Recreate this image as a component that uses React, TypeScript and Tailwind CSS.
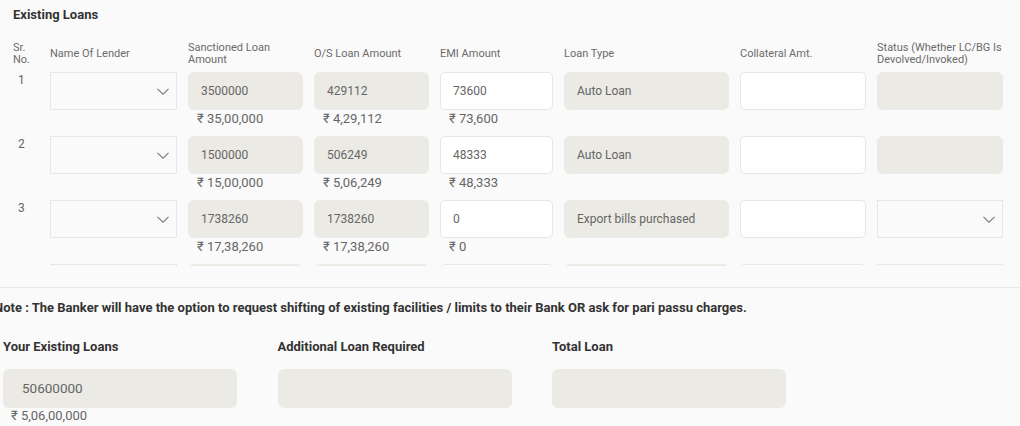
import type { ReactNode } from "react";

type Row = {
  no: number;
  sanctioned: string;
  sanctionedFmt: string;
  os: string;
  osFmt: string;
  emi: string;
  emiFmt: string;
  loanType: string;
  statusSelect?: boolean;
};

const rows: Row[] = [
  { no: 1, sanctioned: "3500000", sanctionedFmt: "₹ 35,00,000", os: "429112", osFmt: "₹ 4,29,112", emi: "73600", emiFmt: "₹ 73,600", loanType: "Auto Loan" },
  { no: 2, sanctioned: "1500000", sanctionedFmt: "₹ 15,00,000", os: "506249", osFmt: "₹ 5,06,249", emi: "48333", emiFmt: "₹ 48,333", loanType: "Auto Loan" },
  { no: 3, sanctioned: "1738260", sanctionedFmt: "₹ 17,38,260", os: "1738260", osFmt: "₹ 17,38,260", emi: "0", emiFmt: "₹ 0", loanType: "Export bills purchased", statusSelect: true },
  { no: 4, sanctioned: "", sanctionedFmt: "", os: "", osFmt: "", emi: "", emiFmt: "", loanType: "", statusSelect: true },
];

const cols = "grid grid-cols-[26px_127px_115px_115px_113px_165px_126px_126px] gap-x-[11px]";

function Chevron() {
  return (
    <svg width="12" height="7" viewBox="0 0 12 7" fill="none" className="shrink-0">
      <path d="M0.5 0.8L6 6.2L11.5 0.8" stroke="#7a7a7a" strokeWidth="1.1" />
    </svg>
  );
}

function SelectBox() {
  return (
    <div className="flex h-[38px] items-center justify-end border border-[#e6e6e6] bg-[#fafafa] pr-[7px]">
      <Chevron />
    </div>
  );
}

function GrayField({ children }: { children?: ReactNode }) {
  return (
    <div className="flex h-[38px] items-center rounded-[6px] bg-[#ebeae4] px-[13px] text-[12px] text-[#666]">
      {children}
    </div>
  );
}

function WhiteField({ children }: { children?: ReactNode }) {
  return (
    <div className="flex h-[38px] items-center rounded-[5px] border border-[#e6e6e6] bg-white px-[12px] text-[12px] text-[#666]">
      {children}
    </div>
  );
}

function Helper({ children }: { children?: ReactNode }) {
  return <div className="h-[18px] pl-[9px] text-[13px] leading-[18px] text-[#666]">{children}</div>;
}

export default function App() {
  return (
    <div className="h-[426px] w-[1020px] overflow-hidden bg-[#fafafa] font-['Roboto','Liberation_Sans',sans-serif]">
      <div className="px-[13px] pt-[7px] pb-[21px]">
        <h2 className="text-[13px] font-bold leading-[16px] text-[#333]">Existing Loans</h2>

        <div className={`${cols} mt-[18px] h-[26px] items-center text-[11px] leading-[12px] text-[#6b6b6b]`}>
          <div>
            Sr.
            <br />
            No.
          </div>
          <div>Name Of Lender</div>
          <div>
            Sanctioned Loan
            <br />
            Amount
          </div>
          <div>O/S Loan Amount</div>
          <div>EMI Amount</div>
          <div>Loan Type</div>
          <div>Collateral Amt.</div>
          <div className="whitespace-nowrap">
            Status (Whether LC/BG Is
            <br />
            Devolved/Invoked)
          </div>
        </div>

        <div className="mt-[5px] h-[194px] overflow-hidden">
          <div className="flex flex-col gap-[8px]">
            {rows.map((r) => (
              <div key={r.no} className={`${cols} h-[56px]`}>
                <div className="pl-[5px] pt-[1px] text-[12px] leading-[14px] text-[#666]">
                  {r.no < 4 ? r.no : ""}
                </div>
                <SelectBox />
                <div>
                  <GrayField>{r.sanctioned}</GrayField>
                  <Helper>{r.sanctionedFmt}</Helper>
                </div>
                <div>
                  <GrayField>{r.os}</GrayField>
                  <Helper>{r.osFmt}</Helper>
                </div>
                <div>
                  <WhiteField>{r.emi}</WhiteField>
                  <Helper>{r.emiFmt}</Helper>
                </div>
                <GrayField>{r.loanType}</GrayField>
                <WhiteField />
                {r.statusSelect ? <SelectBox /> : <GrayField />}
              </div>
            ))}
          </div>
        </div>
      </div>

      <div className="border-t border-[#e8e8e8] pt-[12px]">
        <p className="ml-[-6px] whitespace-nowrap text-[13px] font-bold leading-[16px] text-[#333]">
          Note : The Banker will have the option to request shifting of existing facilities / limits to their Bank OR ask for pari passu charges.
        </p>

        <div className="mt-[23px] flex gap-[40.5px] pl-[3px]">
          {[
            { label: "Your Existing Loans", value: "50600000", fmt: "₹ 5,06,00,000" },
            { label: "Additional Loan Required", value: "", fmt: "" },
            { label: "Total Loan", value: "", fmt: "" },
          ].map((f) => (
            <div key={f.label} className="w-[234px]">
              <div className="text-[13px] font-bold leading-[16px] text-[#333]">{f.label}</div>
              <div className="mt-[14px] flex h-[39px] items-center rounded-[6px] bg-[#ebeae4] px-[19px] text-[13.5px] text-[#666]">
                {f.value}
              </div>
              <div className="pl-[8px] text-[13px] leading-[16px] text-[#666]">{f.fmt}</div>
            </div>
          ))}
        </div>
      </div>
    </div>
  );
}
